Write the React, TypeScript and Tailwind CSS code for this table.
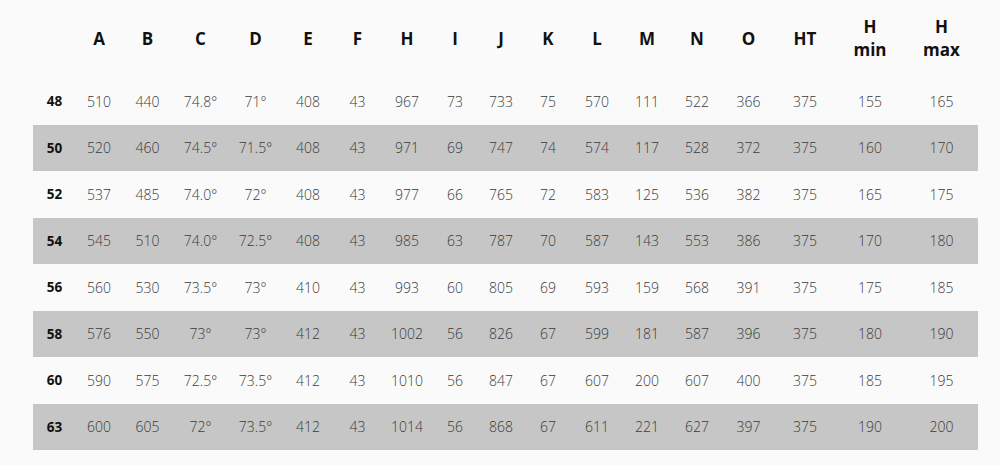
import React from "react";

const headers: string[][] = [
  [""], ["A"], ["B"], ["C"], ["D"], ["E"], ["F"], ["H"], ["I"], ["J"], ["K"], ["L"], ["M"], ["N"], ["O"], ["HT"], ["H", "min"], ["H", "max"],
];

const rows: string[][] = [
  ["48", "510", "440", "74.8°", "71°", "408", "43", "967", "73", "733", "75", "570", "111", "522", "366", "375", "155", "165"],
  ["50", "520", "460", "74.5°", "71.5°", "408", "43", "971", "69", "747", "74", "574", "117", "528", "372", "375", "160", "170"],
  ["52", "537", "485", "74.0°", "72°", "408", "43", "977", "66", "765", "72", "583", "125", "536", "382", "375", "165", "175"],
  ["54", "545", "510", "74.0°", "72.5°", "408", "43", "985", "63", "787", "70", "587", "143", "553", "386", "375", "170", "180"],
  ["56", "560", "530", "73.5°", "73°", "410", "43", "993", "60", "805", "69", "593", "159", "568", "391", "375", "175", "185"],
  ["58", "576", "550", "73°", "73°", "412", "43", "1002", "56", "826", "67", "599", "181", "587", "396", "375", "180", "190"],
  ["60", "590", "575", "72.5°", "73.5°", "412", "43", "1010", "56", "847", "67", "607", "200", "607", "400", "375", "185", "195"],
  ["63", "600", "605", "72°", "73.5°", "412", "43", "1014", "56", "868", "67", "611", "221", "627", "397", "375", "190", "200"],
];

const grid =
  "grid grid-cols-[43px_46px_51px_55px_55px_50px_49px_50px_46px_46px_48px_50px_50px_50px_53px_60px_70px_73px]";

export default function App() {
  return (
    <div
      className="w-[1000px] h-[465px] bg-[#fafafa] overflow-hidden"
      style={{ fontFamily: '"Open Sans", "Noto Sans", sans-serif' }}
    >
      <div className="ml-[33px] w-[945px]">
        <div className={`${grid} h-[78px] items-center`}>
          {headers.map((h, i) => (
            <div
              key={i}
              className="flex flex-col items-center justify-center text-[17px] leading-[23px] font-bold text-[#111111] pb-[2px]"
            >
              {h.map((t, j) => (
                <span key={j}>{t}</span>
              ))}
            </div>
          ))}
        </div>
        {rows.map((r, ri) => (
          <div
            key={ri}
            className={`${grid} h-[46.5px] items-center ${ri % 2 === 1 ? "bg-[#c6c6c6]" : ""}`}
          >
            {r.map((v, ci) => (
              <div
                key={ci}
                className={
                  ci === 0
                    ? "text-center text-[13.5px] font-bold text-[#111111]"
                    : "text-center text-[14px] font-light text-[#3a3a3a]"
                }
              >
                {v}
              </div>
            ))}
          </div>
        ))}
      </div>
    </div>
  );
}
